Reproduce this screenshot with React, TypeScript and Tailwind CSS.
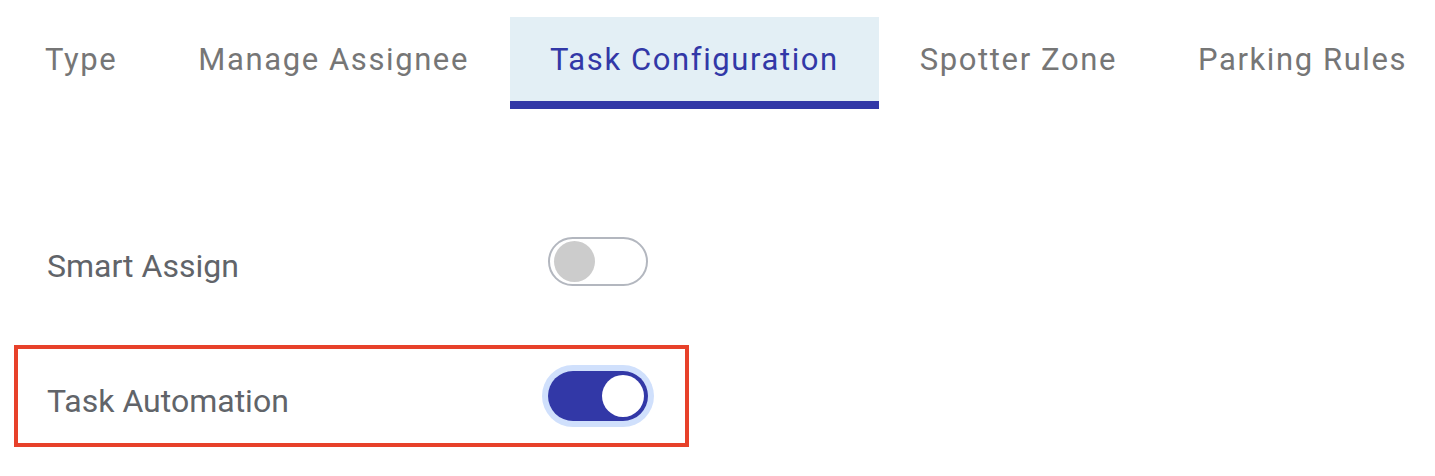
import { useState } from "react";

const tabs = ["Type", "Manage Assignee", "Task Configuration", "Spotter Zone", "Parking Rules"];

function Toggle({ on, onChange }: { on: boolean; onChange: () => void }) {
  if (on) {
    return (
      <button
        onClick={onChange}
        className="flex h-[50px] w-[100px] items-center justify-end rounded-full bg-[#3238a7] pr-[4px] ring-[6px] ring-[#d0e0fc]"
      >
        <span className="h-[42px] w-[42px] rounded-full bg-white" />
      </button>
    );
  }
  return (
    <button
      onClick={onChange}
      className="flex h-[49px] w-[100px] items-center rounded-full border-2 border-[#b3b7bf] bg-white pl-[4px]"
    >
      <span className="h-[41px] w-[41px] rounded-full bg-[#cccccc]" />
    </button>
  );
}

export default function App() {
  const [active, setActive] = useState(2);
  const [smart, setSmart] = useState(false);
  const [auto, setAuto] = useState(true);

  return (
    <div className="h-[476px] w-[1435px] overflow-hidden bg-white font-['Roboto',sans-serif]">
      <div className="flex gap-[1px] pl-[5px] pt-[17px]">
        {tabs.map((tab, i) => (
          <button
            key={tab}
            onClick={() => setActive(i)}
            className={
              i === active
                ? "h-[92px] shrink-0 border-b-[8px] border-[#3238a7] bg-[#e3eff5] px-10 pt-[3px] text-[31px] tracking-[1.6px] text-[#3238a7]"
                : "h-[92px] shrink-0 border-b-[8px] border-transparent px-10 pt-[3px] text-[31px] tracking-[1.6px] text-[#767676]"
            }
          >
            {tab}
          </button>
        ))}
      </div>

      <div className="mt-[101px] flex flex-col gap-[33px] px-[14px]">
        <div className="flex h-[102px] w-[675px] items-center border-4 border-transparent pl-[29px]">
          <span className="mt-[9px] w-[501px] text-[32px] text-[#616469]">Smart Assign</span>
          <Toggle on={smart} onChange={() => setSmart(!smart)} />
        </div>
        <div className="flex h-[102px] w-[675px] items-center border-4 border-[#e7412a] pl-[29px]">
          <span className="mt-[9px] w-[501px] text-[32px] text-[#616469]">Task Automation</span>
          <Toggle on={auto} onChange={() => setAuto(!auto)} />
        </div>
      </div>
    </div>
  );
}
